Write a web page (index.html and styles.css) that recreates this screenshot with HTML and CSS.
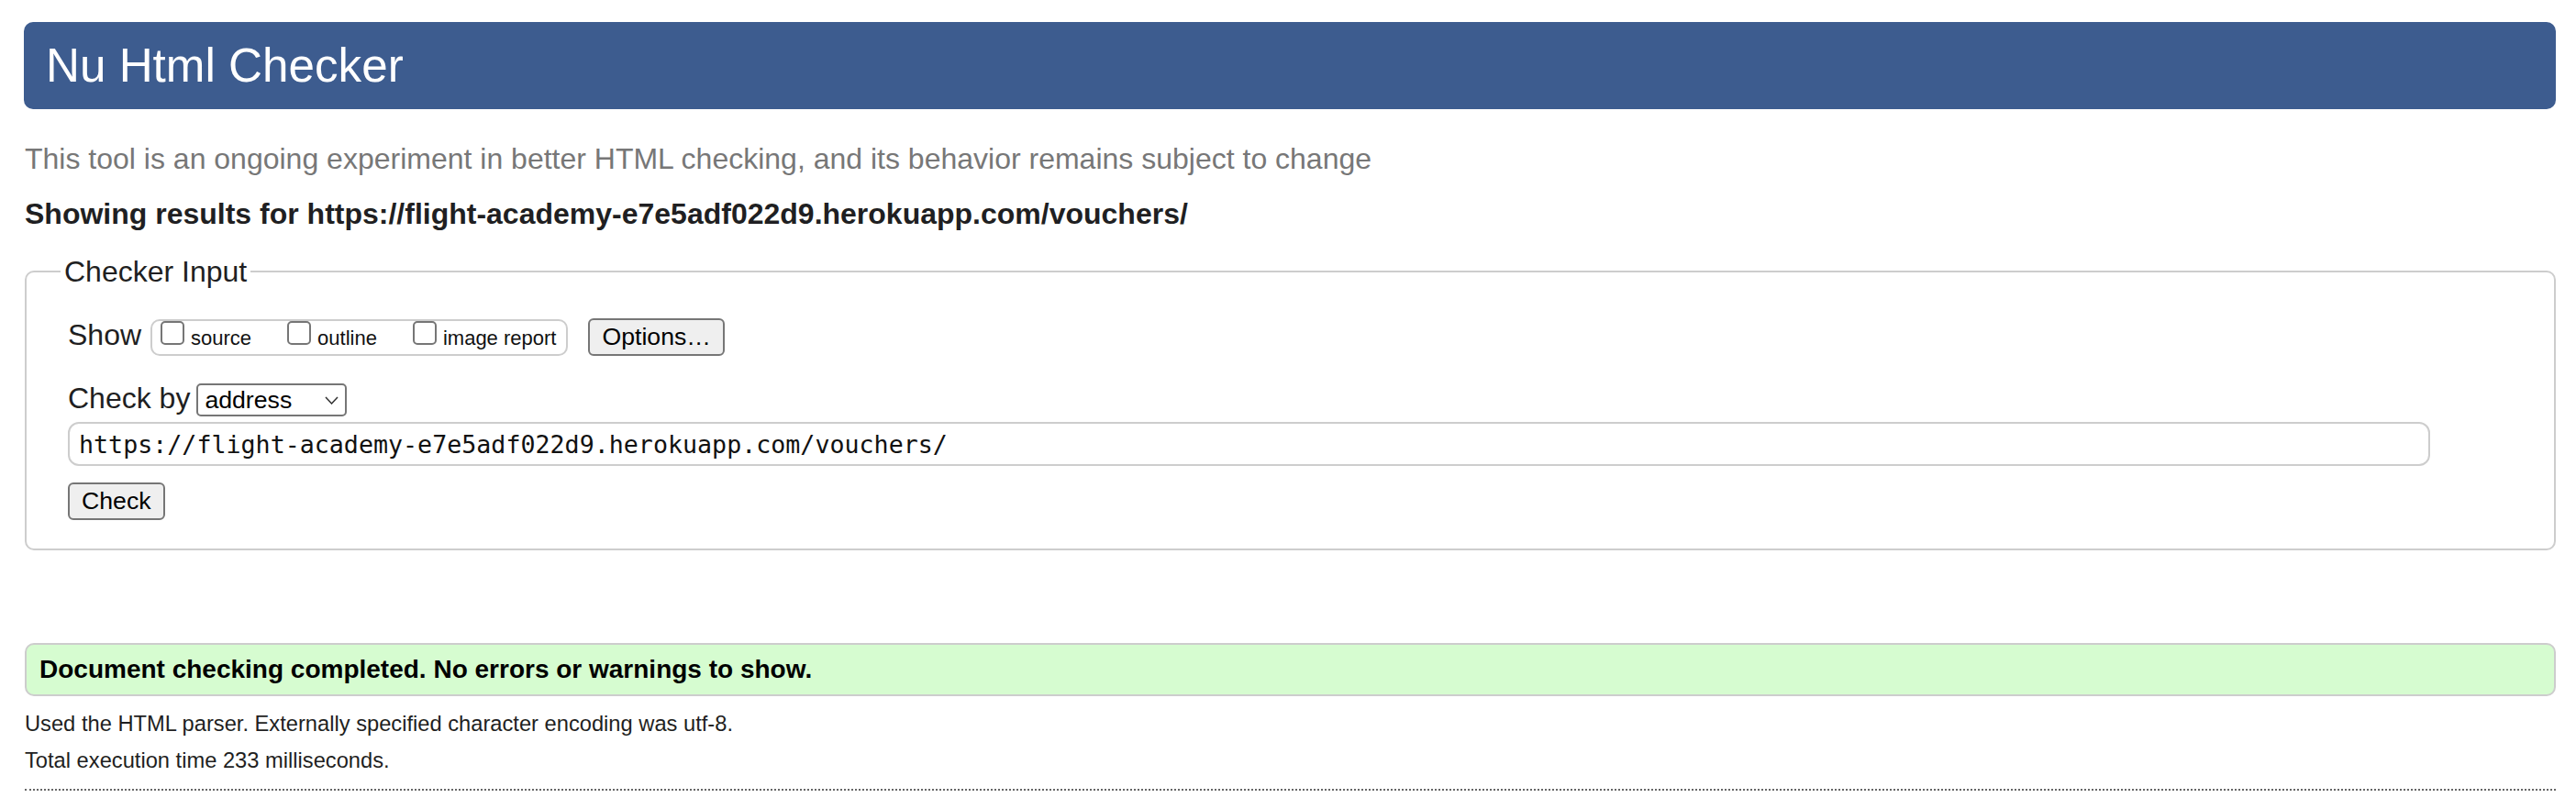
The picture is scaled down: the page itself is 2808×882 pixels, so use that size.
FILE: index.html
```html
<!DOCTYPE html>
<html lang="en">
<head>
<meta charset="utf-8">
<title>Nu Html Checker</title>
<link rel="stylesheet" href="styles.css">
</head>
<body>
<h1 class="banner">Nu Html Checker</h1>
<p class="intro">This tool is an ongoing experiment in better HTML checking, and its behavior remains subject to change</p>
<p class="showing">Showing results for https://flight-academy-e7e5adf022d9.herokuapp.com/vouchers/</p>

<form class="checker">
  <fieldset class="input-set">
    <legend class="legend">Checker Input</legend>
    <div class="show-row">
      <span class="row-label show-label">Show</span>
      <span class="opt-group">
        <label class="opt"><input type="checkbox" class="cb">source</label>
        <label class="opt"><input type="checkbox" class="cb">outline</label>
        <label class="opt"><input type="checkbox" class="cb">image report</label>
      </span>
      <button type="button" class="btn">Options…</button>
    </div>
    <div class="by-row">
      <span class="row-label by-label">Check by</span>
      <span class="select-wrap">
        <select class="sel"><option>address</option></select>
        <svg class="chev" width="15" height="9" viewBox="0 0 15 9"><path d="M1 1 L7.5 8 L14 1" fill="none" stroke="#333" stroke-width="1.5"/></svg>
      </span>
    </div>
    <input class="url" type="text" value="https://flight-academy-e7e5adf022d9.herokuapp.com/vouchers/">
    <button type="button" class="btn check-btn">Check</button>
  </fieldset>
</form>

<p class="success">Document checking completed. No errors or warnings to show.</p>
<p class="stats">Used the HTML parser. Externally specified character encoding was utf-8.</p>
<p class="stats">Total execution time 233 milliseconds.</p>
<hr class="rule">
</body>
</html>
```

FILE: styles.css
```css
html, body {
  background: #fff;
}
body {
  margin: 0;
  padding: 24px 22px 0 26px;
  font-family: "Liberation Sans", Arial, Helvetica, sans-serif;
  color: #222;
}
.banner {
  margin: 0;
  height: 95px;
  line-height: 95px;
  padding: 0 0 0 24px;
  background: #3d5c8f;
  color: #fff;
  border-radius: 10px;
  font-size: 51.2px;
  font-weight: normal;
}
.intro {
  margin: 36px 0 0 1px;
  font-size: 32px;
  line-height: 36px;
  color: #777;
}
.showing {
  margin: 24px 0 0 1px;
  font-size: 32px;
  line-height: 36px;
  font-weight: bold;
  color: #1f1f22;
}
.checker {
  margin: 0;
}
.input-set {
  margin: 27px 0 0 1px;
  border: 2px solid #cdcdcd;
  border-radius: 10px;
  padding: 0 0 31px 45px;
  min-width: 0;
}
.legend {
  font-size: 32px;
  line-height: 36px;
  padding: 0 4px;
  margin-left: -8px;
  color: #1f1f22;
}
.show-row {
  display: flex;
  align-items: baseline;
  margin-top: 33px;
}
.row-label {
  font-size: 32px;
  line-height: 30px;
  color: #1f1f22;
}
.show-label {
  margin-right: 10px;
}
.opt-group {
  display: inline-flex;
  align-items: baseline;
  gap: 39px;
  border: 2px solid #cdcdcd;
  border-radius: 10px;
  padding: 0 11px 0 9px;
  line-height: 35px;
  font-size: 22px;
  color: #111;
  margin-right: 22px;
}
.opt {
  display: inline-block;
  white-space: nowrap;
}
.cb {
  appearance: none;
  -webkit-appearance: none;
  display: inline-block;
  width: 26px;
  height: 26px;
  margin: 0 7px 0 0;
  border: 2px solid #767676;
  border-radius: 5px;
  background: #fff;
  vertical-align: baseline;
  box-sizing: border-box;
}
.btn {
  height: 41px;
  padding: 0 13px;
  border: 2px solid #767676;
  border-radius: 6px;
  background: #efefef;
  font-family: "Liberation Sans", Arial, Helvetica, sans-serif;
  font-size: 26.67px;
  line-height: 37px;
  color: #000;
}
.by-row {
  display: flex;
  align-items: baseline;
  margin-top: 30px;
}
.by-label {
  margin-right: 7px;
}
.select-wrap {
  position: relative;
  display: inline-block;
}
.sel {
  appearance: none;
  -webkit-appearance: none;
  width: 164px;
  height: 36px;
  box-sizing: border-box;
  border: 2px solid #767676;
  border-radius: 5px;
  background: #fff;
  padding: 0 0 0 7px;
  font-family: "Liberation Sans", Arial, Helvetica, sans-serif;
  font-size: 26.67px;
  color: #000;
}
.chev {
  position: absolute;
  right: 9px;
  top: 14px;
  pointer-events: none;
}
.url {
  display: block;
  margin-top: 6px;
  width: 95%;
  height: 48px;
  box-sizing: border-box;
  border: 2px solid #cdcdcd;
  border-radius: 12px;
  padding: 0 10px;
  font-family: "DejaVu Sans Mono", "Liberation Mono", monospace;
  font-size: 26.67px;
  color: #111;
  background: #fff;
}
.check-btn {
  display: block;
  margin-top: 18px;
}
.success {
  margin: 101px 0 0 1px;
  height: 58px;
  box-sizing: border-box;
  border: 2px solid #cdcdcd;
  border-radius: 10px;
  background: #d6fcd0;
  padding: 0 14px;
  line-height: 54px;
  font-size: 28px;
  font-weight: bold;
  color: #000;
}
.stats {
  margin: 0 0 0 1px;
  font-size: 23.7px;
  line-height: 40px;
  color: #1f1f22;
}
.success + .stats {
  margin-top: 10px;
}
.rule {
  margin: 11px 0 0 1px;
  border: 0;
  border-top: 2px dotted #666;
  height: 0;
}
```
